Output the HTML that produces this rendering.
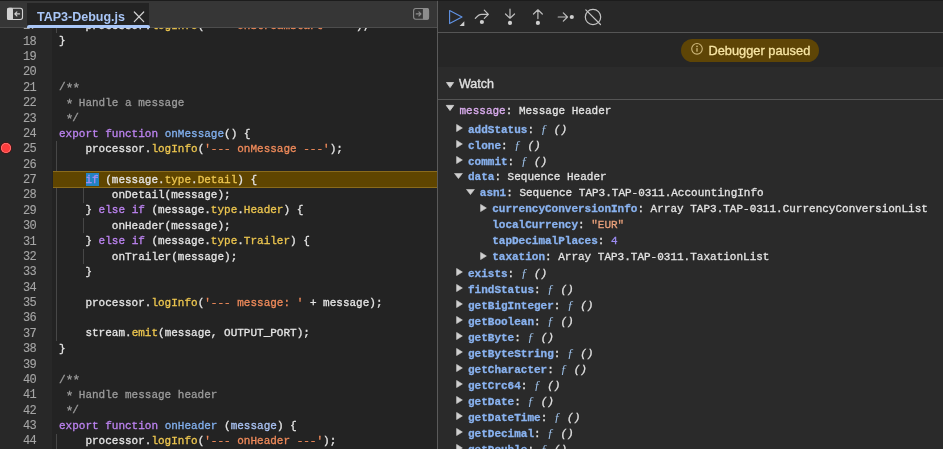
<!DOCTYPE html>
<html><head><meta charset="utf-8">
<style>
html,body{margin:0;padding:0;width:943px;height:449px;overflow:hidden;background:#242424}
body{position:relative;font-family:"Liberation Sans",sans-serif}
.abs{position:absolute}
#left{position:absolute;left:0;top:0;width:437px;height:449px;background:#232323;overflow:hidden}
#tabbar{position:absolute;left:0;top:0;width:437px;height:28px;background:#363636;border-top:1px solid #1c1c1c;box-sizing:border-box}
#tabline{position:absolute;left:0;top:27px;width:437px;height:1px;background:#4d4d4d}
#tab{position:absolute;left:27px;top:3px;width:122px;height:25px;background:#232323}
#tabul{position:absolute;left:27px;top:25px;width:123px;height:3px;background:#a9c6f7;border-radius:2px 2px 0 0}
#tabtext{position:absolute;left:37px;top:9px;font:bold 12.5px/16px "Liberation Sans",sans-serif;color:#a9c6f7;white-space:pre}
#code{position:absolute;left:0;top:18.9px;width:437px;font:11px/15.39px "Liberation Mono",monospace;color:#e4e4e4}
.ln{display:block;height:15.39px;white-space:pre;position:relative}
.ln .n{position:absolute;left:0;top:0.4px;width:36.2px;text-align:right;color:#a6a6a6;font-size:12px;letter-spacing:-0.6px;-webkit-text-stroke:0.1px #a6a6a6 !important}
.ln .c{position:absolute;left:59px}
.kw{color:#bc83f0}
.fn{color:#82b0ee}
.pr{color:#a9c2f2}
.me{color:#edc64f}
.st{color:#ef8a5a}
.cm{color:#9b9b9b}
.guide{position:absolute;width:1px;background:#474747}
#hl{position:absolute;left:53px;top:171px;width:384px;height:17px;background:#5f4500;box-sizing:border-box;border-top:1px solid #8a6b1c;border-bottom:1px solid #8a6b1c}
#sel{position:absolute;left:86px;top:173px;width:13px;height:13px;background:#2383c2}
#bp{position:absolute;left:1px;top:142.6px;width:10.2px;height:10.2px;border-radius:50%;background:#fb3d3d;box-shadow:inset 0 0 0 0.8px #ff7a7a,0 0 0 0.8px #5a0c0c;box-sizing:border-box}
#divider{position:absolute;left:437px;top:1px;width:1px;height:449px;background:#5a5a5a}
#right{position:absolute;left:438px;top:0;width:505px;height:449px;background:#2a2a2a;overflow:hidden}
#toolbar{position:absolute;left:0;top:0;width:505px;height:32px;background:#282828;border-top:1px solid #1c1c1c;box-sizing:border-box}
#tbline{position:absolute;left:0;top:32px;width:505px;height:1px;background:#555}
#pausearea{position:absolute;left:0;top:33px;width:505px;height:34px;background:#262626}
#watchhdr{position:absolute;left:0;top:67px;width:505px;height:32px;background:#2b2b2b}
#watchline{position:absolute;left:0;top:99px;width:505px;height:1px;background:#555}
#pill{position:absolute;left:681px;top:39px;width:138px;height:23px;border-radius:12px;background:#5e4506}
#pilltext{position:absolute;left:708.5px;top:43px;font:12.8px/16px "Liberation Sans",sans-serif;color:#f8e6a4;-webkit-text-stroke:0.3px #f8e6a4;white-space:pre}
#watchtext{position:absolute;left:459px;top:76px;font:12.5px/16px "Liberation Sans",sans-serif;color:#e0e0e0;-webkit-text-stroke:0.35px #e0e0e0;white-space:pre}
.row{position:absolute;white-space:pre;font:11px/16px "Liberation Mono",monospace;color:#e3e3e3}
.k{color:#89b2ef;font-weight:bold}
.km{color:#dcaef0}
.fi{color:#9cbfe6;font-style:italic;font-family:"Liberation Serif",serif;font-size:12.8px;-webkit-text-stroke:0 !important;display:inline-block;width:6.6px;text-align:center}
.it{font-style:italic}
.sv{color:#e9a07a}
.nv{color:#9c8cf2}
.tri{position:absolute}
#code,.row,#left .abs{-webkit-text-stroke:0.3px currentColor} body{will-change:transform}.ast{display:inline-block;width:6.6px;text-align:center;position:relative;top:3.8px;font-size:13.5px;line-height:10px;vertical-align:top}</style></head><body>
<div id="left">
  <div class="abs" style="left:0;top:0;width:52px;height:449px;background:#282828"></div>
  <div class="guide" style="left:56px;top:2.61px;height:30.78px"></div>
<div class="guide" style="left:56px;top:141.12px;height:200.07px"></div>
<div class="guide" style="left:56px;top:433.53px;height:30.78px"></div>
<div class="guide" style="left:83px;top:187.29px;height:15.39px"></div>
<div class="guide" style="left:83px;top:218.07px;height:15.39px"></div>
<div class="guide" style="left:83px;top:248.85px;height:15.39px"></div>
  <div id="code">
<div class="ln"><span class="n">17</span><span class="c">    processor.<span class="me">logInfo</span>(<span class="st">'--- onStreamStart ---'</span>);</span></div>
<div class="ln"><span class="n">18</span><span class="c">}</span></div>
<div class="ln"><span class="n">19</span><span class="c"></span></div>
<div class="ln"><span class="n">20</span><span class="c"></span></div>
<div class="ln"><span class="n">21</span><span class="c cm">/<span class="ast">*</span><span class="ast">*</span></span></div>
<div class="ln"><span class="n">22</span><span class="c cm"> <span class="ast">*</span> Handle a message</span></div>
<div class="ln"><span class="n">23</span><span class="c cm"> <span class="ast">*</span>/</span></div>
<div class="ln"><span class="n">24</span><span class="c"><span class="kw">export</span> <span class="kw">function</span> <span class="fn">onMessage</span>() {</span></div>
<div class="ln"><span class="n">25</span><span class="c">    processor.<span class="me">logInfo</span>(<span class="st">'--- onMessage ---'</span>);</span></div>
<div class="ln"><span class="n">26</span><span class="c"></span></div>
<div class="ln"><span class="n">27</span><span class="c"></span></div>
<div class="ln"><span class="n">28</span><span class="c">        onDetail(message);</span></div>
<div class="ln"><span class="n">29</span><span class="c">    } <span class="kw">else</span> <span class="kw">if</span> (message.<span class="me">type</span>.<span class="me">Header</span>) {</span></div>
<div class="ln"><span class="n">30</span><span class="c">        onHeader(message);</span></div>
<div class="ln"><span class="n">31</span><span class="c">    } <span class="kw">else</span> <span class="kw">if</span> (message.<span class="me">type</span>.<span class="me">Trailer</span>) {</span></div>
<div class="ln"><span class="n">32</span><span class="c">        onTrailer(message);</span></div>
<div class="ln"><span class="n">33</span><span class="c">    }</span></div>
<div class="ln"><span class="n">34</span><span class="c"></span></div>
<div class="ln"><span class="n">35</span><span class="c">    processor.<span class="me">logInfo</span>(<span class="st">'--- message: '</span> + message);</span></div>
<div class="ln"><span class="n">36</span><span class="c"></span></div>
<div class="ln"><span class="n">37</span><span class="c">    stream.<span class="me">emit</span>(message, OUTPUT_PORT);</span></div>
<div class="ln"><span class="n">38</span><span class="c">}</span></div>
<div class="ln"><span class="n">39</span><span class="c"></span></div>
<div class="ln"><span class="n">40</span><span class="c cm">/<span class="ast">*</span><span class="ast">*</span></span></div>
<div class="ln"><span class="n">41</span><span class="c cm"> <span class="ast">*</span> Handle message header</span></div>
<div class="ln"><span class="n">42</span><span class="c cm"> <span class="ast">*</span>/</span></div>
<div class="ln"><span class="n">43</span><span class="c"><span class="kw">export</span> <span class="kw">function</span> <span class="fn">onHeader</span> (<span class="pr">message</span>) {</span></div>
<div class="ln"><span class="n">44</span><span class="c">    processor.<span class="me">logInfo</span>(<span class="st">'--- onHeader ---'</span>);</span></div>
  </div>
  <div id="hl"></div>
  <div id="sel"></div>
  <div class="abs" style="left:0;top:172.8px;width:437px;font:11px/15.39px 'Liberation Mono',monospace;color:#e4e4e4;white-space:pre"><span style="position:absolute;left:59px">    <span style="color:#a58ef4">if</span> (message.<span class="me">type</span>.<span class="me">Detail</span>) {</span></div>
  <div id="bp"></div>
  <div id="tabbar"></div>
  <div id="tab"></div>
  <div id="tabline"></div>
  <div id="tabul"></div>
  <div id="tabtext">TAP3-Debug.js</div>
  <svg class="abs" style="left:130px;top:8px" width="18" height="18" viewBox="0 0 18 18"><path d="M4.3 4 L13.7 13.6 M13.7 4 L4.3 13.6" stroke="#d4d4d4" stroke-width="1.2" stroke-linecap="round" fill="none"/></svg>
</div>
<div id="divider"></div>
<div id="right">
  <div id="toolbar"></div>
  <div id="tbline"></div>
  <div id="pausearea"></div>
  <div id="watchhdr"></div>
  <div id="watchline"></div>
</div>
<div id="pill"></div>
<svg class="abs" style="left:690px;top:42px" width="14" height="14" viewBox="0 0 14 14"><circle cx="7" cy="6.85" r="5.3" fill="none" stroke="#cdb77a" stroke-width="1.1"/><circle cx="7" cy="4.4" r="0.8" fill="#cdb77a"/><rect x="6.35" y="6.1" width="1.3" height="3.6" fill="#cdb77a"/></svg>
<div id="pilltext">Debugger paused</div>
<svg class="abs" style="left:444px;top:80px" width="12" height="10" viewBox="0 0 12 10"><path d="M2.5 2.5 L9.6 2.5 L6.05 7.6Z" fill="#d0d0d0" stroke="#d0d0d0" stroke-width="0.8" stroke-linejoin="round"/></svg>
<div id="watchtext">Watch</div>
<svg class="abs" style="left:0;top:0" width="943" height="33" viewBox="0 0 943 33">
  <g fill="none" stroke-linecap="round" stroke-linejoin="round">
    <path d="M449.6 10.6 L462 17.1 L449.6 23.6 Z" stroke="#6194e6" stroke-width="1.1"/>
    <path d="M475.3 18.4 Q478.6 14.3 481.5 14.3 L488.4 14.3 M484.3 10.2 L488.4 14.3 L484.3 18.4" stroke="#c4c4c4" stroke-width="1.2"/>
    <path d="M510 9.2 L510 18 M505.5 14 L510 18.2 L514.5 14" stroke="#bdbdbd" stroke-width="1.2"/>
    <path d="M537.9 10 L537.9 18.6 M533.5 14 L537.9 9.8 L542.3 14" stroke="#bdbdbd" stroke-width="1.2"/>
    <path d="M558.2 17 L567.3 17 M563.3 12.8 L567.5 17 L563.3 21.2" stroke="#bdbdbd" stroke-width="1.2"/>
    <circle cx="593" cy="17" r="7.7" stroke="#c4c4c4" stroke-width="1.2"/>
    <path d="M585.8 9.8 L600.5 24.5" stroke="#c4c4c4" stroke-width="1.2"/>
  </g>
  <g fill="#cfcfcf">
    <path d="M464.3 21.2 L464.3 25.9 L459.6 25.9 Z"/>
    <circle cx="481.9" cy="22" r="2.1"/>
    <circle cx="510" cy="22.9" r="2.1"/>
    <circle cx="537.9" cy="22.9" r="2.1"/>
    <circle cx="571.8" cy="17" r="2.1"/>
  </g>
</svg>
<svg class="abs" style="left:0;top:0" width="940" height="27" viewBox="0 0 940 27">
  <rect x="7.5" y="8.3" width="15" height="11.2" rx="2.2" fill="none" stroke="#d2d2d2" stroke-width="1.1"/>
  <rect x="7" y="7.8" width="6" height="12.2" rx="1.5" fill="#d2d2d2"/>
  <path d="M14.8 13.9 L19.6 13.9 M16.9 11.8 L14.8 13.9 L16.9 16" fill="none" stroke="#cfcfcf" stroke-width="1.1" stroke-linecap="round" stroke-linejoin="round"/>
  <rect x="413.6" y="8.5" width="15" height="10.8" rx="2.2" fill="none" stroke="#8c8c8c" stroke-width="1.1"/>
  <rect x="422.9" y="8" width="6" height="11.8" rx="1.5" fill="#8c8c8c"/>
  <path d="M416.2 13.9 L421 13.9 M418.9 11.8 L421 13.9 L418.9 16" fill="none" stroke="#8c8c8c" stroke-width="1.1" stroke-linecap="round" stroke-linejoin="round"/>
</svg>
<svg class="abs" style="left:0;top:0" width="943" height="449" viewBox="0 0 943 449">
  <path d="M446.3 105.4 L453.7 105.4 L450 110.5Z" fill="#d0d0d0" stroke="#d0d0d0" stroke-width="0.9" stroke-linejoin="round"/>
</svg>
<div class="row" style="left:459.5px;top:103.3px"><span class="km">message</span>: Message Header</div>
<div class="row" style="left:468.0px;top:121px"><span class="k">addStatus</span>: <span class="fi">ƒ</span> <span class="it">()</span></div>
<svg class="tri" style="left:455.8px;top:124.0px" width="7" height="8" viewBox="0 0 7 8"><path d="M0.6 0.4 L6.4 4 L0.6 7.6Z" fill="#cfcfcf" stroke="#cfcfcf" stroke-width="0.6" stroke-linejoin="round"/></svg>
<div class="row" style="left:468.0px;top:137px"><span class="k">clone</span>: <span class="fi">ƒ</span> <span class="it">()</span></div>
<svg class="tri" style="left:455.8px;top:140.0px" width="7" height="8" viewBox="0 0 7 8"><path d="M0.6 0.4 L6.4 4 L0.6 7.6Z" fill="#cfcfcf" stroke="#cfcfcf" stroke-width="0.6" stroke-linejoin="round"/></svg>
<div class="row" style="left:468.0px;top:153px"><span class="k">commit</span>: <span class="fi">ƒ</span> <span class="it">()</span></div>
<svg class="tri" style="left:455.8px;top:156.0px" width="7" height="8" viewBox="0 0 7 8"><path d="M0.6 0.4 L6.4 4 L0.6 7.6Z" fill="#cfcfcf" stroke="#cfcfcf" stroke-width="0.6" stroke-linejoin="round"/></svg>
<div class="row" style="left:468.0px;top:169px"><span class="k">data</span>: Sequence Header</div>
<svg class="tri" style="left:453.8px;top:173.2px" width="9" height="6" viewBox="0 0 9 6"><path d="M0.5 0.4 L8.4 0.4 L4.45 5.6Z" fill="#cfcfcf" stroke="#cfcfcf" stroke-width="0.6" stroke-linejoin="round"/></svg>
<div class="row" style="left:479.8px;top:185px"><span class="k">asn1</span>: Sequence TAP3.TAP-0311.AccountingInfo</div>
<svg class="tri" style="left:465.6px;top:189.2px" width="9" height="6" viewBox="0 0 9 6"><path d="M0.5 0.4 L8.4 0.4 L4.45 5.6Z" fill="#cfcfcf" stroke="#cfcfcf" stroke-width="0.6" stroke-linejoin="round"/></svg>
<div class="row" style="left:492.2px;top:201px"><span class="k">currencyConversionInfo</span>: Array TAP3.TAP-0311.CurrencyConversionList</div>
<svg class="tri" style="left:480.0px;top:204.0px" width="7" height="8" viewBox="0 0 7 8"><path d="M0.6 0.4 L6.4 4 L0.6 7.6Z" fill="#cfcfcf" stroke="#cfcfcf" stroke-width="0.6" stroke-linejoin="round"/></svg>
<div class="row" style="left:492.2px;top:217px"><span class="k">localCurrency</span>: <span class="sv">"EUR"</span></div>
<div class="row" style="left:492.2px;top:233px"><span class="k">tapDecimalPlaces</span>: <span class="nv">4</span></div>
<div class="row" style="left:492.2px;top:249px"><span class="k">taxation</span>: Array TAP3.TAP-0311.TaxationList</div>
<svg class="tri" style="left:480.0px;top:252.0px" width="7" height="8" viewBox="0 0 7 8"><path d="M0.6 0.4 L6.4 4 L0.6 7.6Z" fill="#cfcfcf" stroke="#cfcfcf" stroke-width="0.6" stroke-linejoin="round"/></svg>
<div class="row" style="left:468.0px;top:265px"><span class="k">exists</span>: <span class="fi">ƒ</span> <span class="it">()</span></div>
<svg class="tri" style="left:455.8px;top:268.0px" width="7" height="8" viewBox="0 0 7 8"><path d="M0.6 0.4 L6.4 4 L0.6 7.6Z" fill="#cfcfcf" stroke="#cfcfcf" stroke-width="0.6" stroke-linejoin="round"/></svg>
<div class="row" style="left:468.0px;top:281px"><span class="k">findStatus</span>: <span class="fi">ƒ</span> <span class="it">()</span></div>
<svg class="tri" style="left:455.8px;top:284.0px" width="7" height="8" viewBox="0 0 7 8"><path d="M0.6 0.4 L6.4 4 L0.6 7.6Z" fill="#cfcfcf" stroke="#cfcfcf" stroke-width="0.6" stroke-linejoin="round"/></svg>
<div class="row" style="left:468.0px;top:297px"><span class="k">getBigInteger</span>: <span class="fi">ƒ</span> <span class="it">()</span></div>
<svg class="tri" style="left:455.8px;top:300.0px" width="7" height="8" viewBox="0 0 7 8"><path d="M0.6 0.4 L6.4 4 L0.6 7.6Z" fill="#cfcfcf" stroke="#cfcfcf" stroke-width="0.6" stroke-linejoin="round"/></svg>
<div class="row" style="left:468.0px;top:313px"><span class="k">getBoolean</span>: <span class="fi">ƒ</span> <span class="it">()</span></div>
<svg class="tri" style="left:455.8px;top:316.0px" width="7" height="8" viewBox="0 0 7 8"><path d="M0.6 0.4 L6.4 4 L0.6 7.6Z" fill="#cfcfcf" stroke="#cfcfcf" stroke-width="0.6" stroke-linejoin="round"/></svg>
<div class="row" style="left:468.0px;top:329px"><span class="k">getByte</span>: <span class="fi">ƒ</span> <span class="it">()</span></div>
<svg class="tri" style="left:455.8px;top:332.0px" width="7" height="8" viewBox="0 0 7 8"><path d="M0.6 0.4 L6.4 4 L0.6 7.6Z" fill="#cfcfcf" stroke="#cfcfcf" stroke-width="0.6" stroke-linejoin="round"/></svg>
<div class="row" style="left:468.0px;top:345px"><span class="k">getByteString</span>: <span class="fi">ƒ</span> <span class="it">()</span></div>
<svg class="tri" style="left:455.8px;top:348.0px" width="7" height="8" viewBox="0 0 7 8"><path d="M0.6 0.4 L6.4 4 L0.6 7.6Z" fill="#cfcfcf" stroke="#cfcfcf" stroke-width="0.6" stroke-linejoin="round"/></svg>
<div class="row" style="left:468.0px;top:361px"><span class="k">getCharacter</span>: <span class="fi">ƒ</span> <span class="it">()</span></div>
<svg class="tri" style="left:455.8px;top:364.0px" width="7" height="8" viewBox="0 0 7 8"><path d="M0.6 0.4 L6.4 4 L0.6 7.6Z" fill="#cfcfcf" stroke="#cfcfcf" stroke-width="0.6" stroke-linejoin="round"/></svg>
<div class="row" style="left:468.0px;top:377px"><span class="k">getCrc64</span>: <span class="fi">ƒ</span> <span class="it">()</span></div>
<svg class="tri" style="left:455.8px;top:380.0px" width="7" height="8" viewBox="0 0 7 8"><path d="M0.6 0.4 L6.4 4 L0.6 7.6Z" fill="#cfcfcf" stroke="#cfcfcf" stroke-width="0.6" stroke-linejoin="round"/></svg>
<div class="row" style="left:468.0px;top:393px"><span class="k">getDate</span>: <span class="fi">ƒ</span> <span class="it">()</span></div>
<svg class="tri" style="left:455.8px;top:396.0px" width="7" height="8" viewBox="0 0 7 8"><path d="M0.6 0.4 L6.4 4 L0.6 7.6Z" fill="#cfcfcf" stroke="#cfcfcf" stroke-width="0.6" stroke-linejoin="round"/></svg>
<div class="row" style="left:468.0px;top:409px"><span class="k">getDateTime</span>: <span class="fi">ƒ</span> <span class="it">()</span></div>
<svg class="tri" style="left:455.8px;top:412.0px" width="7" height="8" viewBox="0 0 7 8"><path d="M0.6 0.4 L6.4 4 L0.6 7.6Z" fill="#cfcfcf" stroke="#cfcfcf" stroke-width="0.6" stroke-linejoin="round"/></svg>
<div class="row" style="left:468.0px;top:425px"><span class="k">getDecimal</span>: <span class="fi">ƒ</span> <span class="it">()</span></div>
<svg class="tri" style="left:455.8px;top:428.0px" width="7" height="8" viewBox="0 0 7 8"><path d="M0.6 0.4 L6.4 4 L0.6 7.6Z" fill="#cfcfcf" stroke="#cfcfcf" stroke-width="0.6" stroke-linejoin="round"/></svg>
<div class="row" style="left:468.0px;top:441px"><span class="k">getDouble</span>: <span class="fi">ƒ</span> <span class="it">()</span></div>
<svg class="tri" style="left:455.8px;top:444.0px" width="7" height="8" viewBox="0 0 7 8"><path d="M0.6 0.4 L6.4 4 L0.6 7.6Z" fill="#cfcfcf" stroke="#cfcfcf" stroke-width="0.6" stroke-linejoin="round"/></svg>
</body></html>
